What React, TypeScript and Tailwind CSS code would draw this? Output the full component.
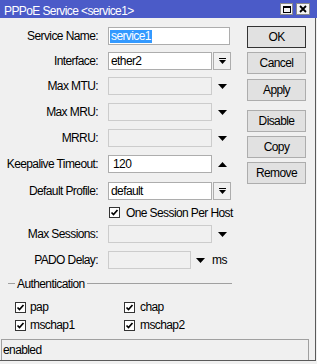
import React from "react";

const F =
  "font-['Liberation_Sans',Arial,sans-serif] text-[12px] tracking-[-0.6px] text-black";

function Tri({ up = false }: { up?: boolean }) {
  return (
    <svg width="9" height="5" viewBox="0 0 9 5" className="block shrink-0">
      <path d={up ? "M0 5H9L4.5 0Z" : "M0 0H9L4.5 5Z"} fill="#000" />
    </svg>
  );
}

function DropBtn() {
  return (
    <div className="ml-px flex h-[18px] w-[18px] shrink-0 items-center justify-center border border-[#adadad] bg-[#f0f0f0]">
      <svg width="7" height="7" viewBox="0 0 7 7" className="block">
        <rect x="0" y="0" width="7" height="1" fill="#000" />
        <path d="M0 2H7L3.5 6Z" fill="#000" />
      </svg>
    </div>
  );
}

function Check({ className = "" }: { className?: string }) {
  return (
    <div
      className={`flex h-[11px] w-[11px] shrink-0 items-center justify-center border border-[#333333] bg-white ${className}`}
    >
      <svg width="9" height="9" viewBox="0 0 9 9" className="block">
        <path d="M1.5 4.5L3.5 6.5L7.5 2" stroke="#000" strokeWidth="1.7" fill="none" />
      </svg>
    </div>
  );
}

function Label({ children }: { children: React.ReactNode }) {
  return <div className="w-[98px] shrink-0 whitespace-nowrap text-right">{children}</div>;
}

function Row({
  label,
  className = "",
  children,
}: {
  label: string;
  className?: string;
  children: React.ReactNode;
}) {
  return (
    <div className={`flex h-[18px] items-center ${className}`}>
      <Label>{label}</Label>
      <div className="ml-[10px] flex items-center">{children}</div>
    </div>
  );
}

function Box({
  w,
  disabled = false,
  children,
}: {
  w: string;
  disabled?: boolean;
  children?: React.ReactNode;
}) {
  return (
    <div
      className={`flex h-[18px] shrink-0 items-center border pl-[2px] ${w} ${
        disabled ? "border-[#cccccc] bg-[#f0f0f0]" : "border-[#adadad] bg-white"
      }`}
    >
      {children}
    </div>
  );
}

function Btn({
  children,
  def = false,
  className = "",
}: {
  children: React.ReactNode;
  def?: boolean;
  className?: string;
}) {
  return (
    <div
      className={`flex h-[22px] w-[59px] items-center justify-center border bg-[#e1e1e1] ${
        def ? "border-[#333333]" : "border-[#adadad]"
      } ${className}`}
    >
      {children}
    </div>
  );
}

export default function App() {
  return (
    <div className={`relative h-[364px] w-[317px] overflow-hidden bg-[#f0f0f0] ${F}`}>
      {/* Title bar */}
      <div className="flex h-[18px] w-full items-center bg-[#4b5bc8] pl-[4px] pr-[7px]">
        <span className="pt-[3px] text-white">PPPoE Service &lt;service1&gt;</span>
        <div className="ml-auto flex gap-[3px]">
          <div className="flex h-[12px] w-[13px] items-center justify-center border border-[#8a8a8a] bg-[#f4f4f4]">
            <div className="h-[7px] w-[8px] border border-t-2 border-black" />
          </div>
          <div className="flex h-[12px] w-[14px] items-center justify-center border border-[#8a8a8a] bg-[#f4f4f4]">
            <svg width="8" height="8" viewBox="0 0 8 8" className="block">
              <path d="M1 1L7 7M7 1L1 7" stroke="#000" strokeWidth="1.8" />
            </svg>
          </div>
        </div>
      </div>

      {/* Body */}
      <div className="flex h-[343px] w-[316px] flex-col border-b border-r border-[#5a5a5a]">
        <div className="flex pt-[8px]">
          <div className="flex w-[230px] flex-col">
            <Row label="Service Name:" className="mt-px">
              <div className="flex h-[18px] w-[122px] items-center border border-[#adadad] bg-white pl-px">
                <span className="inline-block bg-[#3399ff] pl-px pr-px leading-[13px] text-white">
                  service1
                </span>
              </div>
            </Row>
            <Row label="Interface:" className="mt-[7px]">
              <Box w="w-[104px]">ether2</Box>
              <DropBtn />
            </Row>
            <Row label="Max MTU:" className="mt-[7px]">
              <Box w="w-[104px]" disabled />
              <div className="ml-[6px]">
                <Tri />
              </div>
            </Row>
            <Row label="Max MRU:" className="mt-[8px]">
              <Box w="w-[104px]" disabled />
              <div className="ml-[6px]">
                <Tri />
              </div>
            </Row>
            <Row label="MRRU:" className="mt-[8px]">
              <Box w="w-[104px]" disabled />
              <div className="ml-[6px]">
                <Tri />
              </div>
            </Row>
            <Row label="Keepalive Timeout:" className="mt-[8px]">
              <Box w="w-[104px]">
                <span className="pl-[2px]">120</span>
              </Box>
              <div className="ml-[6px]">
                <Tri up />
              </div>
            </Row>
            <Row label="Default Profile:" className="mt-[9px]">
              <Box w="w-[104px]">default</Box>
              <DropBtn />
            </Row>
            <div className="mt-[7px] flex h-[11px] items-center pl-[109px]">
              <Check />
              <span className="ml-[6px] whitespace-nowrap">One Session Per Host</span>
            </div>
            <Row label="Max Sessions:" className="mt-[7px]">
              <Box w="w-[104px]" disabled />
              <div className="ml-[6px]">
                <Tri />
              </div>
            </Row>
            <Row label="PADO Delay:" className="mt-[8px]">
              <Box w="w-[83px]" disabled />
              <div className="ml-[5px]">
                <Tri />
              </div>
              <span className="ml-[7px]">ms</span>
            </Row>
          </div>

          <div className="ml-[17px] flex w-[59px] flex-col">
            <Btn def>OK</Btn>
            <Btn className="mt-[4px]">Cancel</Btn>
            <Btn className="mt-[5px]">Apply</Btn>
            <Btn className="mt-[9px]">Disable</Btn>
            <Btn className="mt-[4px]">Copy</Btn>
            <Btn className="mt-[4px]">Remove</Btn>
          </div>
        </div>

        {/* Authentication */}
        <div className="mt-[8px] flex h-[13px] w-[232px] items-center pl-[8px]">
          <div className="h-px w-[7px] bg-[#a0a0a0]" />
          <span className="px-[2px]">Authentication</span>
          <div className="h-px flex-1 bg-[#a0a0a0]" />
        </div>
        <div className="mt-[8px] grid h-[11px] grid-cols-[109px_1fr] pl-[15px]">
          <div className="flex items-center">
            <Check />
            <span className="ml-[4px]">pap</span>
          </div>
          <div className="flex items-center">
            <Check />
            <span className="ml-[5px]">chap</span>
          </div>
        </div>
        <div className="mt-[7px] grid h-[11px] grid-cols-[109px_1fr] pl-[15px]">
          <div className="flex items-center">
            <Check />
            <span className="ml-[4px]">mschap1</span>
          </div>
          <div className="flex items-center">
            <Check />
            <span className="ml-[5px]">mschap2</span>
          </div>
        </div>

        {/* Status bar */}
        <div className="ml-px mt-auto h-[21px] w-[308px] border-l border-r border-t border-[#a0a0a0] pl-px leading-[20px]">
          enabled
        </div>
      </div>
    </div>
  );
}
